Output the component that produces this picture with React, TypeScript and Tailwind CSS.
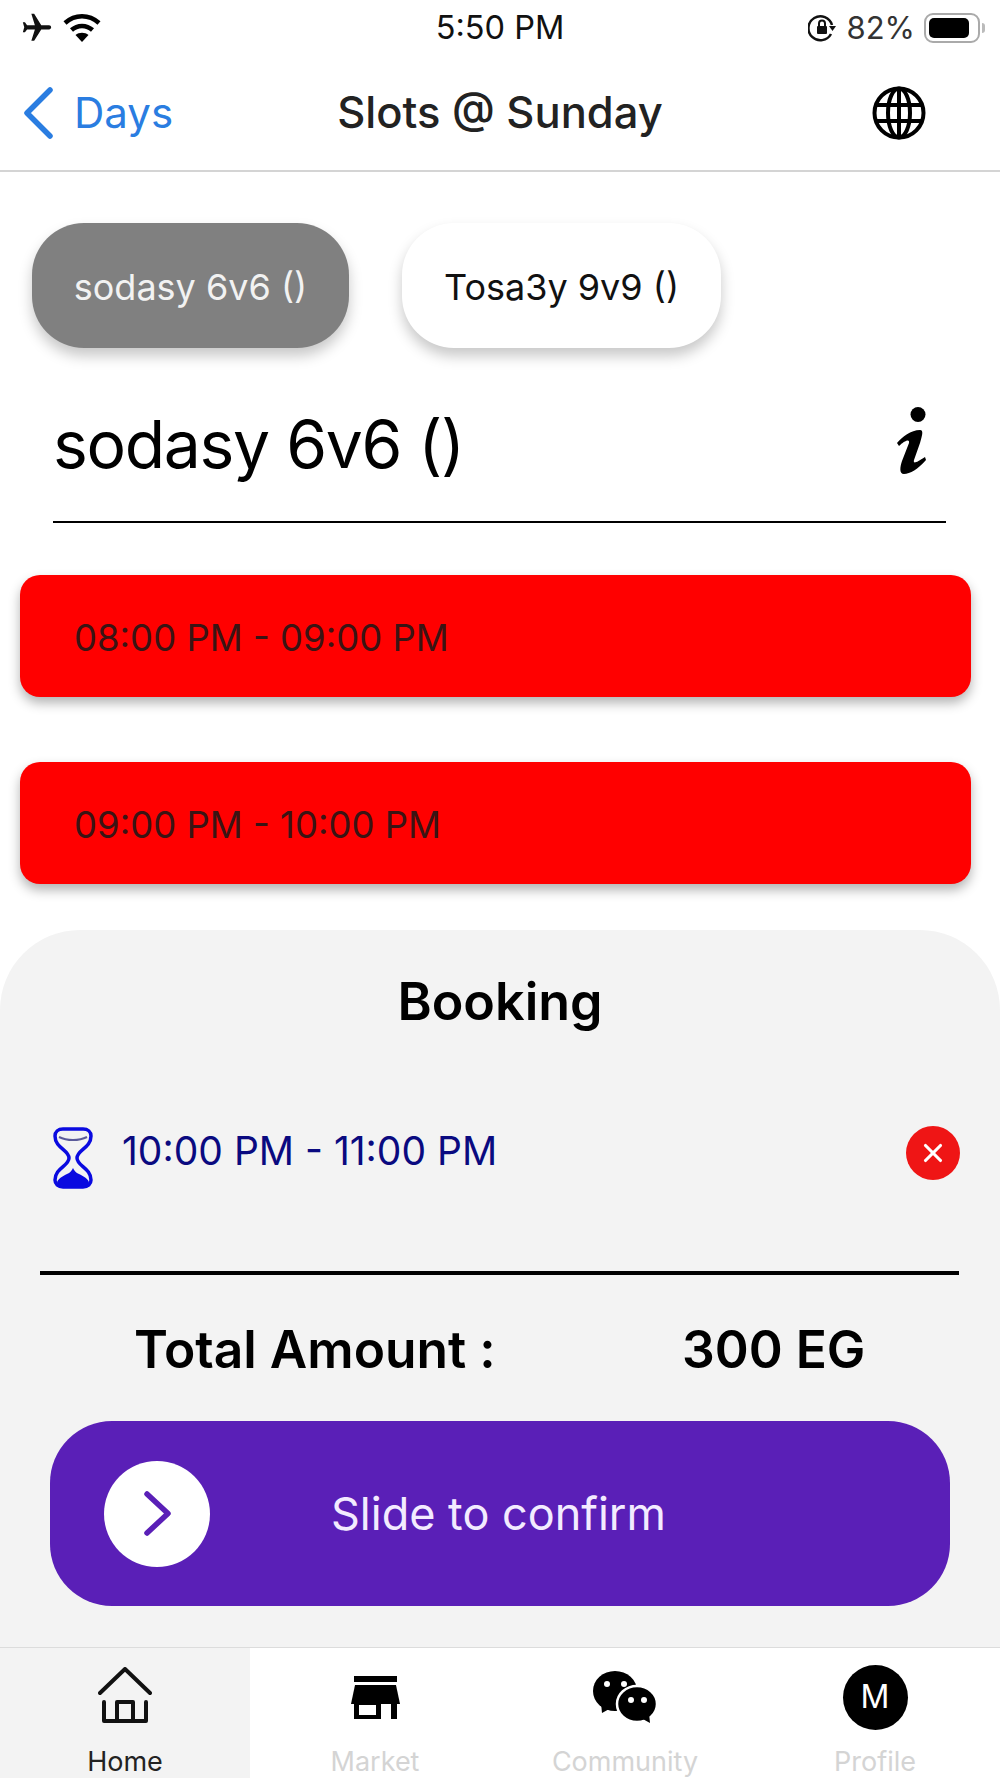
// App.tsx
import { X } from 'lucide-react';
import { MdFlight } from 'react-icons/md';

const font = "font-['Inter','Liberation_Sans',sans-serif]";

function WifiIcon() {
  return (
    <svg width="38" height="29" viewBox="0 0 38 29" fill="none" stroke="#000" strokeWidth="4.5">
      <path d="M2 10c10-9 24-9 34 0" />
      <path d="M8.500 17c6-5.500 15-5.500 21 0" />
      <path d="M19 29l-6.500-7c3.500-3 9.500-3 13 0z" fill="#000" stroke="none" />
    </svg>
  );
}

function LockRotation() {
  return (
    <svg width="29" height="28" viewBox="0 0 29 28" fill="none" stroke="#111" strokeWidth="2.500">
      <path d="M23 20a12 12 0 1 1 1-9" />
      <path d="M21 12h7l-3.500 5z" fill="#111" stroke="none" />
      <rect x="9" y="12" width="10" height="8" rx="1" fill="#111" stroke="none" />
      <path d="M11 12V9.500a3 3 0 0 1 6 0V12" strokeWidth="2" />
    </svg>
  );
}

function BackChevron() {
  return (
    <svg width="32" height="52" viewBox="0 0 32 52" fill="none" stroke="#2a7de1" strokeWidth="5.500" strokeLinecap="round" strokeLinejoin="round">
      <path d="M28 3L5 26l23 23" />
    </svg>
  );
}

function GlobeIcon() {
  return (
    <svg width="54" height="54" viewBox="0 0 54 54" fill="none" stroke="#000" strokeWidth="4">
      <circle cx="27" cy="27" r="24.500" />
      <ellipse cx="27" cy="27" rx="11" ry="24.500" />
      <path d="M5 19h44M5 35h44M27 3v48" />
    </svg>
  );
}

function InfoIcon() {
  return (
    <svg width="30" height="67" viewBox="0 0 30 67" fill="#000">
      <circle cx="22" cy="7.500" r="7.500" />
      <path d="M1 36C6 30 15 23 24 23c4 0 2 6 0 13l-6 17c-1 4 2 3 11-3l1 3c-8 9-16 14-22 14-5 0-4-7-2-13l7-18c1-5-5-2-10 3z" />
    </svg>
  );
}

function Hourglass() {
  return (
    <svg width="40" height="62" viewBox="0 0 40 62" fill="none" stroke="#0a0ae0" strokeWidth="3.500" strokeLinejoin="round">
      <path d="M10 2h20c5 0 8 3 8 7 0 12-14 14-14 22s14 10 14 22c0 4-3 7-8 7H10c-5 0-8-3-8-7 0-12 14-14 14-22S2 21 2 9c0-4 3-7 8-7z" />
      <path d="M6 10c8 4 20 4 28 0" stroke="#5a5a9a" strokeWidth="2" />
      <path d="M4 56c0-4 6-7 10-9 3-1 5-4 6-6 1 2 3 5 6 6 4 2 10 5 10 9 0 2-2 3-6 3H10c-4 0-6-1-6-3z" fill="#0a0ae0" stroke="none" />
    </svg>
  );
}

function HomeIcon() {
  return (
    <svg className="mb-[4px]" width="54" height="56" viewBox="0 0 54 56" fill="none" stroke="#111" strokeWidth="4" strokeLinecap="round" strokeLinejoin="round">
      <path d="M2 26L27 2l25 24" />
      <path d="M6 35v19h42V35" />
      <path d="M19 54V35h16v19" />
    </svg>
  );
}

function MarketIcon() {
  return (
    <svg width="49" height="43" viewBox="0 0 49 43" fill="#000">
      <rect x="3" y="0" width="43" height="6" />
      <path d="M4 9h41l4 19H0z" />
      <path d="M3 28h43v15H3z" />
      <rect x="8" y="29" width="17" height="10" fill="#fff" />
      <rect x="30" y="28" width="10" height="15" fill="#fff" />
    </svg>
  );
}

function CommunityIcon() {
  return (
    <svg width="64" height="52" viewBox="0 0 64 52" fill="#000">
      <ellipse cx="22" cy="20" rx="22" ry="20" />
      <path d="M8 32l1 10 9-5z" />
      <circle cx="14" cy="13" r="3" fill="#fff" />
      <circle cx="31" cy="13" r="3" fill="#fff" />
      <ellipse cx="44" cy="33" rx="20" ry="18" stroke="#fff" strokeWidth="2.500" />
      <path d="M48 47l9 5-1-10z" />
      <circle cx="38" cy="29" r="3" fill="#fff" />
      <circle cx="51" cy="29" r="3" fill="#fff" />
    </svg>
  );
}

function SlideChevron() {
  return (
    <svg width="27" height="45" viewBox="0 0 27 45" fill="none" stroke="#5a1fb7" strokeWidth="5.500" strokeLinecap="round" strokeLinejoin="round">
      <path d="M3 3l21 19.500L3 42" />
    </svg>
  );
}

function TimeRow({ label }: { label: string }) {
  return (
    <div className="mx-[20px] mb-[65px] flex h-[122px] w-[951px] items-center rounded-[20px] bg-[#ff0000] pl-[54px] pt-[4px] text-[36.500px] text-[#3a1414] shadow-[0_6px_12px_rgba(0,0,0,0.3)]">
      {label}
    </div>
  );
}

function Tab({ label, active, children }: { label: string; active?: boolean; children: React.ReactNode }) {
  return (
    <div className={`flex h-full w-[250px] flex-col items-center ${active ? 'bg-[#f3f3f3]' : 'bg-white'}`}>
      <div className="flex h-[98px] items-center justify-center">{children}</div>
      <span className={`text-[27px] leading-[32px] ${active ? 'text-[#222]' : 'text-[#d4d4d4]'}`}>{label}</span>
    </div>
  );
}

export default function App() {
  return (
    <div className={`${font} flex h-[1778px] w-[1000px] flex-col overflow-hidden bg-white text-black`}>
      {/* status bar */}
      <div className="relative flex h-[56px] items-center justify-between pl-[20px] pr-[15px] text-[31px] text-[#111]">
        <div className="flex items-center gap-[9px]">
          <MdFlight className="rotate-90" size={34} />
          <WifiIcon />
        </div>
        <span className="absolute left-0 right-0 pt-[2px] text-center text-[32.500px]">5:50 PM</span>
        <div className="flex items-center gap-[9px]">
          <LockRotation />
          <span className="text-[#333]">82%</span>
          <div className="flex items-center">
            <div className="flex h-[30px] w-[56px] items-center rounded-[9px] border-2 border-[#aaa] p-[3px]">
              <div className="h-full w-[40px] rounded-[5px] bg-black" />
            </div>
            <div className="ml-[2px] h-[10px] w-[3px] rounded-r bg-[#bbb]" />
          </div>
        </div>
      </div>

      {/* nav */}
      <div className="relative flex h-[116px] shrink-0 items-center justify-between border-b-2 border-[#d4d4d4] pl-[22px] pr-[74px]">
        <div className="flex items-center text-[#2a7de1]">
          <BackChevron />
          <span className="ml-[20px] text-[42px] font-normal">Days</span>
        </div>
        <span className="absolute left-0 right-0 text-center text-[43.500px] font-medium text-[#222]">Slots @ Sunday</span>
        <GlobeIcon />
      </div>

      {/* chips */}
      <div className="flex gap-[53px] pl-[32px] pt-[51px]">
        <div className="flex h-[125px] w-[317px] items-center justify-center rounded-[52px] bg-[#808080] pt-[4px] text-[36px] text-[#f2f2f2] shadow-[0_8px_14px_rgba(0,0,0,0.22)]">
          sodasy 6v6 ()
        </div>
        <div className="flex h-[125px] w-[319px] items-center justify-center rounded-[52px] bg-white pt-[4px] text-[36px] text-[#111] shadow-[0_8px_14px_rgba(0,0,0,0.22)]">
          Tosa3y 9v9 ()
        </div>
      </div>

      {/* title */}
      <div className="mx-[53px] mt-[54px] flex h-[122px] w-[893px] items-center justify-between border-b-2 border-black pb-[34px]">
        <span className="text-[66px] leading-none tracking-[-0.02em]">sodasy 6v6 ()</span>
        <div className="mr-[20px] mt-[-8px]">
          <InfoIcon />
        </div>
      </div>

      {/* slots */}
      <div className="mt-[52px]">
        <TimeRow label="08:00 PM - 09:00 PM" />
        <TimeRow label="09:00 PM - 10:00 PM" />
      </div>

      {/* booking sheet */}
      <div className="-mt-[19px] flex h-[717px] shrink-0 flex-col rounded-t-[80px] bg-[#f3f3f3]">
        <div className="mt-[46px] text-center text-[52px] font-semibold leading-[52px]">Booking</div>
        <div className="mt-[96px] flex h-[66px] items-start pl-[53px] pr-[40px]">
          <div className="mt-[3px]">
            <Hourglass />
          </div>
          <span className="ml-[29px] text-[39px] leading-[54px] text-[#0a0a80]">10:00 PM - 11:00 PM</span>
          <div className="ml-auto mt-[2px] flex h-[54px] w-[54px] items-center justify-center rounded-full bg-[#ef1515]">
            <X size={30} color="#fff" strokeWidth={2.5} />
          </div>
        </div>
        <div className="mx-[40px] mt-[81px] h-[4px] w-[919px] bg-black" />
        <div className="mt-[49px] flex h-[52px] items-center pl-[134px] text-[51.500px] font-semibold">
          <span className="w-[548px]">Total Amount :</span>
          <span>300 EG</span>
        </div>
        <div className="mx-[50px] mt-[45px] flex h-[185px] w-[900px] items-center rounded-[62px] bg-[#5a1fb7] pl-[54px]">
          <div className="flex h-[106px] w-[106px] items-center justify-center rounded-full bg-white">
            <SlideChevron />
          </div>
          <span className="ml-[121px] text-[45px] text-[#f3ebff]">Slide to confirm</span>
        </div>
      </div>

      {/* tab bar */}
      <div className="flex h-[131px] shrink-0 border-t border-[#dcdcdc]">
        <Tab label="Home" active>
          <HomeIcon />
        </Tab>
        <Tab label="Market">
          <MarketIcon />
        </Tab>
        <Tab label="Community">
          <CommunityIcon />
        </Tab>
        <Tab label="Profile">
          <div className="flex h-[65px] w-[65px] items-center justify-center rounded-full bg-black text-[32px] text-white">M</div>
        </Tab>
      </div>
    </div>
  );
}
